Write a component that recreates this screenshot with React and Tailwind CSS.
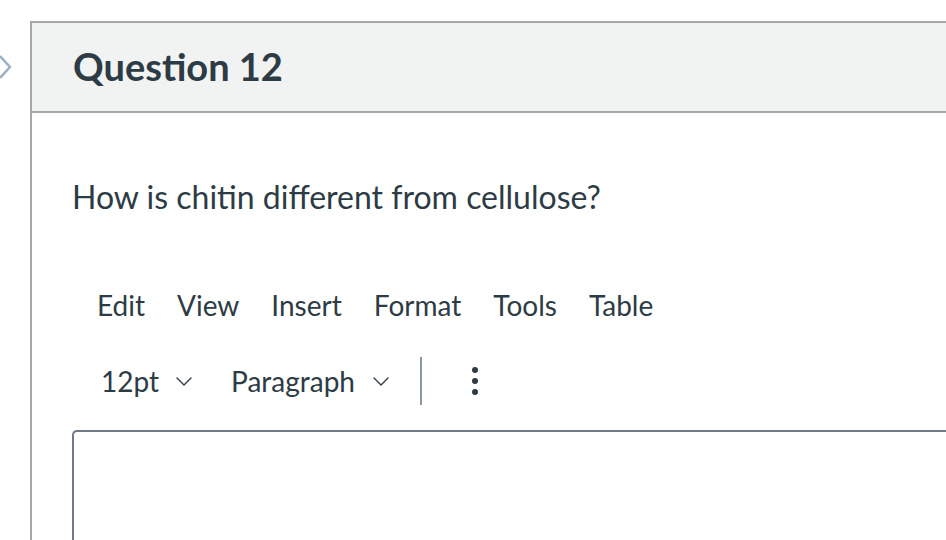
import React from 'react';

const menuItems = ['Edit', 'View', 'Insert', 'Format', 'Tools', 'Table'];

const ChevronDown = ({ className }) => (
  <svg className={className} viewBox="0 0 16 9" fill="none" stroke="currentColor" strokeWidth="1.4">
    <path d="M1 1l7 7 7-7" strokeLinecap="round" strokeLinejoin="round" />
  </svg>
);

export default function App() {
  return (
    <div className="relative w-[946px] h-[540px] overflow-hidden bg-white font-['Lato',sans-serif] text-[#2d3b45]">
      {/* collapse arrow on the left edge */}
      <svg
        className="absolute left-[-4px] top-[54px] w-[18px] h-[26px] text-[#9cb2c4]"
        viewBox="0 0 18 26"
        fill="none"
        stroke="currentColor"
        strokeWidth="2.6"
      >
        <path d="M4 2l10 11-10 11" strokeLinejoin="round" />
      </svg>

      <div className="ml-[30px] mt-[21px] w-[1000px] border-t-2 border-l-2 border-[#a8a8a8]">
        <div className="h-[90px] bg-[#f1f2f2] border-b-2 border-[#a8a8a8] pl-[41px] flex items-center">
          <h2 className="text-[38px] font-bold leading-none pb-[2px]">Question 12</h2>
        </div>

        <div className="pl-[40px] pt-[64px] h-[430px]">
          <p className="text-[32px] leading-[40px]">How is chitin different from cellulose?</p>

          <div className="mt-[68px] flex items-center pl-[9px] h-[40px]">
            {menuItems.map((item) => (
              <span key={item} className="px-[16px] text-[28px] leading-none">
                {item}
              </span>
            ))}
          </div>

          <div className="mt-[32px] flex items-center pl-[29px] h-[48px]">
            <span className="text-[28px] leading-none">12pt</span>
            <ChevronDown className="ml-[17px] w-[16px] h-[9px] text-[#2d3b45]" />
            <span className="ml-[39px] text-[28px] leading-none">Paragraph</span>
            <ChevronDown className="ml-[18px] w-[16px] h-[9px] text-[#2d3b45]" />
            <div className="ml-[31px] w-[2px] h-[48px] bg-[#8b969e]" />
            <div className="ml-[50px] flex flex-col gap-[5px]">
              <span className="w-[6px] h-[6px] rounded-full bg-[#2d3b45]" />
              <span className="w-[6px] h-[6px] rounded-full bg-[#2d3b45]" />
              <span className="w-[6px] h-[6px] rounded-full bg-[#2d3b45]" />
            </div>
          </div>

          <div className="mt-[25px] h-[200px] border-t-2 border-l-2 border-[#6f7a84] rounded-tl-[5px]" />
        </div>
      </div>
    </div>
  );
}
